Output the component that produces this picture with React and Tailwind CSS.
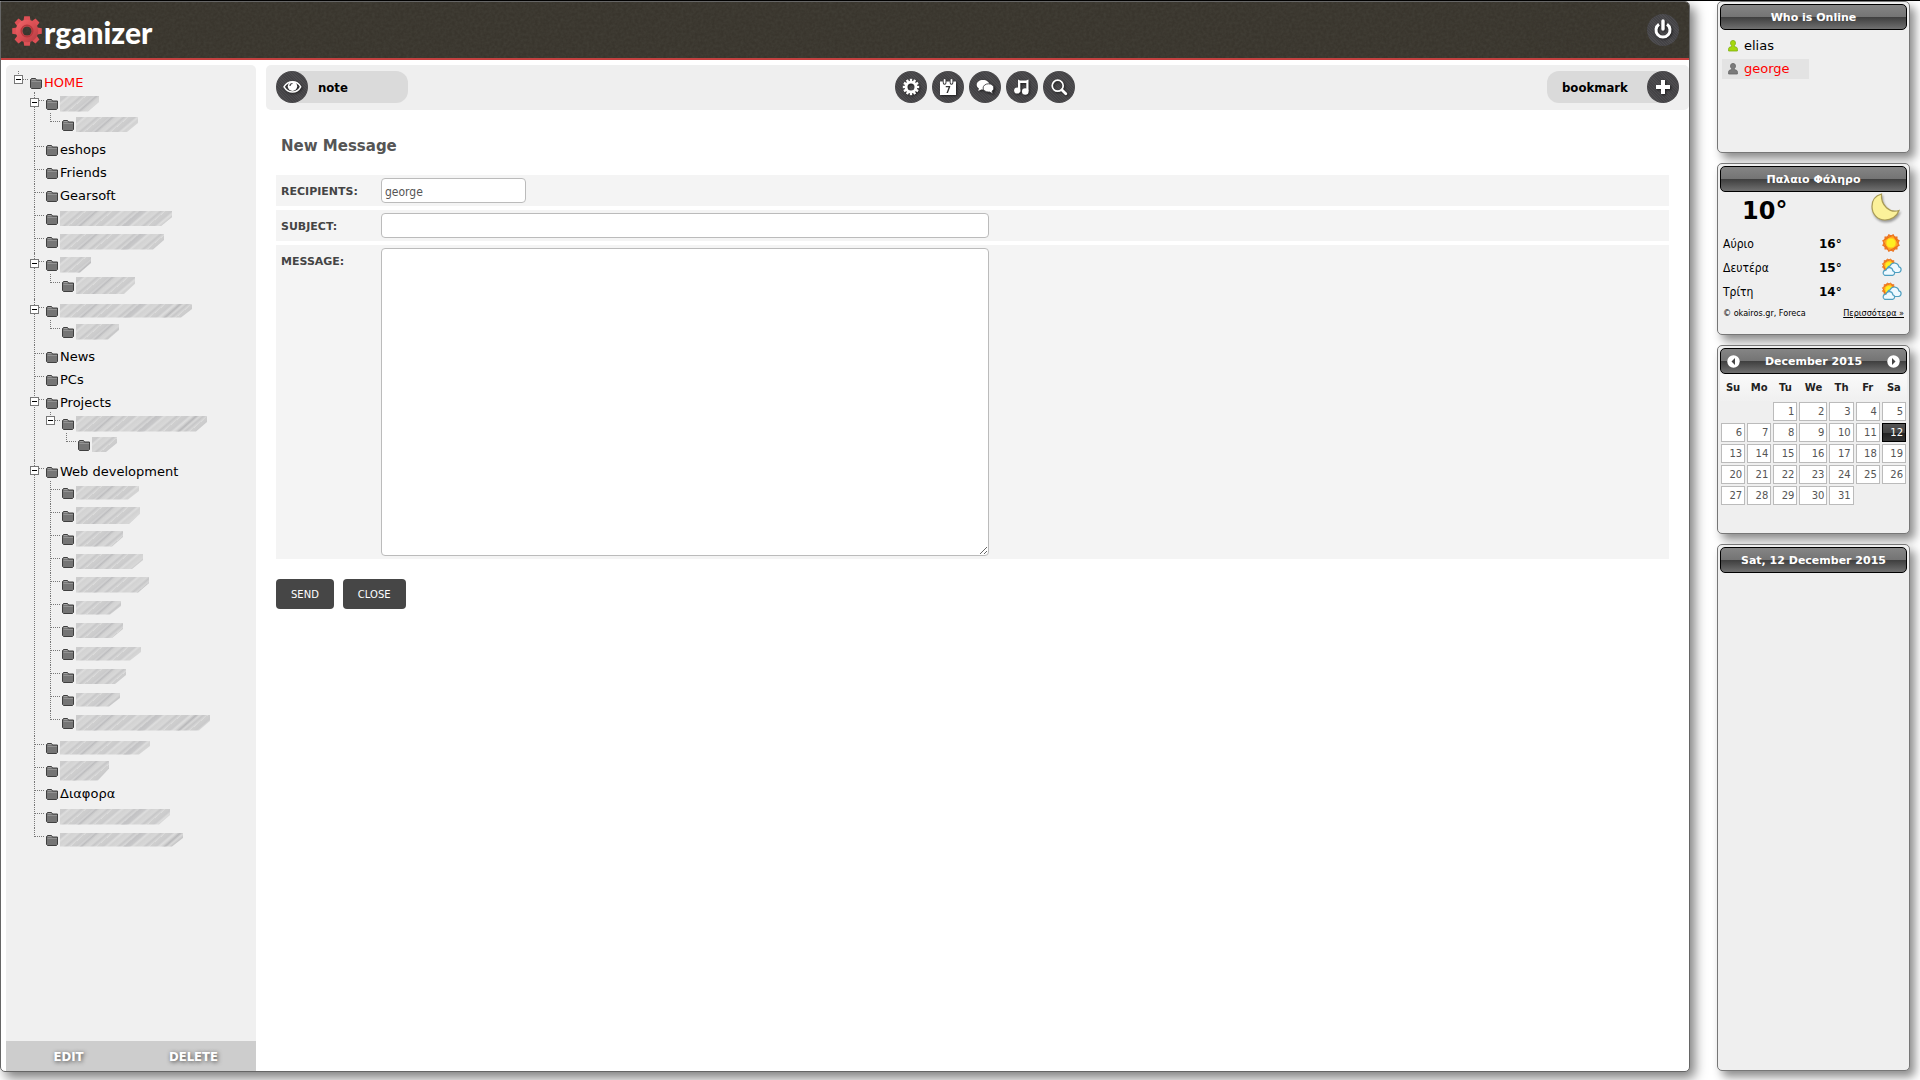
import React from "react";

const VERDANA = "font-['DejaVu_Sans',sans-serif]";
const TAHOMA = "font-['DejaVu_Sans_Condensed','DejaVu_Sans',sans-serif]";

const hidden = (w, h, children) => ({ w, h, children });
const named = (label, children) => ({ label, children });

const TREE = [
  {
    label: "HOME",
    active: true,
    children: [
      hidden(39, 16, [hidden(62, 15)]),
      named("eshops"),
      named("Friends"),
      named("Gearsoft"),
      hidden(112, 15),
      hidden(104, 16),
      hidden(31, 16, [hidden(59, 17)]),
      hidden(132, 14, [hidden(43, 16)]),
      named("News"),
      named("PCs"),
      named("Projects", [hidden(131, 16, [hidden(25, 15)])]),
      named("Web development", [
        hidden(63, 14),
        hidden(64, 17),
        hidden(47, 16),
        hidden(67, 15),
        hidden(73, 16),
        hidden(45, 14),
        hidden(47, 15),
        hidden(65, 14),
        hidden(50, 15),
        hidden(44, 14),
        hidden(134, 16),
      ]),
      hidden(90, 14),
      hidden(49, 20),
      named("Διαφορα"),
      hidden(110, 16),
      hidden(123, 14),
    ],
  },
];

function Folder() {
  return (
    <svg width="12" height="12" viewBox="0 0 12 12" className="shrink-0" aria-hidden="true">
      <path d="M.5 10.5V2.5l1-1h4l1 1.5h5v7.5l-1 1h-9z" fill="#757575" stroke="#3f3f3f" />
      <path d="M1.5 4.5h9.5" stroke="#929292" />
      <path d="M2 2.5h3.5" stroke="#a0a0a0" />
    </svg>
  );
}

function Masked({ w, h }) {
  return (
    <span
      className="block shrink-0 bg-[linear-gradient(139deg,transparent_0_22px,#bcbcbe_24px,transparent_26px_51px,#c2c2c4_53px,transparent_57px_77px,#b8b8ba_79px,transparent_81px),repeating-linear-gradient(140deg,#cfcfcf_0,#cacacb_4px,#dedede_6px,#d2d2d2_8px,#d8d8d8_12px,#c6c6c7_14px,#dcdcdc_17px)] [clip-path:polygon(0_0,100%_0,100%_40%,calc(100%-11px)_100%,0_100%)]"
      style={{ width: w, height: h }}
    />
  );
}

function Node({ node, depth, last }) {
  const inner = depth === 1;
  return (
    <li className="relative">
      <span
        className={
          "absolute left-0 top-0 border-l border-dotted border-[#777] " + (last ? "h-[9px]" : "h-full")
        }
      />
      <div className="relative flex h-[23px] items-center pl-3">
        <span className="absolute left-0 top-2 w-[10px] border-t border-dotted border-[#777]" />
        {node.children && (
          <button
            type="button"
            aria-label="Collapse"
            className={
              "absolute -left-1 flex size-[9px] items-center justify-center border border-[#777] bg-white " +
              (inner ? "top-1.5" : "top-1")
            }
          >
            <span className="h-px w-[5px] bg-black" />
          </button>
        )}
        <Folder />
        {node.label ? (
          <a
            href="#"
            className={"ml-0.5 whitespace-nowrap text-[13px] leading-[23px] " + (node.active ? "text-[#f00]" : "text-black")}
          >
            {node.label}
          </a>
        ) : (
          <span className="ml-0.5">
            <Masked w={node.w} h={node.h} />
          </span>
        )}
      </div>
      {node.children && <Branch nodes={node.children} depth={depth + 1} />}
    </li>
  );
}

function Branch({ nodes, depth }) {
  return (
    <ul className={depth === 0 ? "pl-3" : "-mt-0.5 pb-0.5 pl-4"}>
      {nodes.map((n, i) => (
        <Node key={i} node={n} depth={depth} last={i === nodes.length - 1} />
      ))}
    </ul>
  );
}

const teeth = (n) => Array.from({ length: n }, (_, i) => (360 / n) * i);

function LogoGear() {
  return (
    <svg width="30" height="30" viewBox="0 0 30 30" aria-hidden="true">
      <defs>
        <linearGradient id="gearFill" x1="0" y1="0" x2="1" y2="1">
          <stop offset="0" stopColor="#f2666a" />
          <stop offset="0.5" stopColor="#d94e53" />
          <stop offset="1" stopColor="#b03c42" />
        </linearGradient>
        <mask id="gearHole">
          <rect width="30" height="30" fill="#fff" />
          <circle cx="15" cy="15" r="4.6" fill="#000" />
        </mask>
      </defs>
      <g mask="url(#gearHole)" fill="#dd5055">
        {teeth(8).map((a) => (
          <path key={a} d="M11.300 6 12.200.2h5.600L18.700 6z" transform={`rotate(${a} 15 15)`} />
        ))}
        <circle cx="15" cy="15" r="11.2" fill="url(#gearFill)" />
        <circle cx="15" cy="15" r="5.800" fill="none" stroke="#b5383d" strokeWidth="1.400" />
      </g>
    </svg>
  );
}

const ICONS = {
  eye: (
    <g>
      <path d="M8 15.800C10.300 12.300 13 10.800 16.500 10.800s6.200 1.500 8.200 5c-2 3.500-4.800 5.200-8.200 5.200s-6.200-1.700-8.500-5.200z" fill="none" stroke="#fff" strokeWidth="1.500" />
      <circle cx="16.500" cy="15.300" r="4.700" fill="#fff" />
      <path d="M14 15a2.500 2.500 0 0 1 2.500-2.500" fill="none" stroke="#444346" strokeWidth="1.200" />
    </g>
  ),
  gear: (
    <g>
      {teeth(12).map((a) => (
        <rect key={a} x="14.800" y="7.800" width="2.400" height="4" fill="#fff" transform={`rotate(${a} 16 16)`} />
      ))}
      <circle cx="16" cy="16" r="4.900" fill="none" stroke="#fff" strokeWidth="2.800" />
    </g>
  ),
  calendar: (
    <g>
      <path d="M8 10.500h2.800v1.500a1.800 1.800 0 0 0 3.600 0v-1.500h3.300v1.500a1.800 1.800 0 0 0 3.600 0v-1.500H24V24H8z" fill="#fff" />
      <path d="M12.600 8.800v3M19.500 8.800v3" stroke="#fff" strokeWidth="1.800" strokeLinecap="round" />
      <text x="16" y="21.800" textAnchor="middle" fontSize="8" fontWeight="bold" fontFamily="DejaVu Sans" fill="#333">7</text>
    </g>
  ),
  chat: (
    <g fill="#fff">
      <path d="M14 9c-3.700 0-6.300 2.100-6.300 4.800 0 1.600.9 2.900 2.200 3.800-.1.900-.5 1.600-1 2.200 1.400-.1 2.600-.6 3.500-1.300.5.100 1 .1 1.600.1 3.700 0 6.400-2.100 6.400-4.800S17.700 9 14 9z" />
      <path d="M19.500 12.800c3.100 0 5.300 1.800 5.300 4.200 0 1.400-.7 2.500-1.800 3.200.1.900.5 1.700 1 2.300-1.300-.2-2.400-.8-3.300-1.500h-1.200c-3.100 0-5.400-1.700-5.400-4s2.300-4.200 5.400-4.200z" stroke="#444346" strokeWidth=".9" />
    </g>
  ),
  music: (
    <g fill="#fff">
      <path d="M12 8.500 14 9.500h6l2.500-1V20h-2.200v-8h-6v9H12z" />
      <circle cx="11.200" cy="19.500" r="3.100" />
      <circle cx="19.300" cy="20.500" r="3.300" />
    </g>
  ),
  search: (
    <g fill="none" stroke="#fff">
      <circle cx="14.700" cy="14.700" r="5.500" strokeWidth="1.700" />
      <path d="m19 19 3.800 3.800" strokeWidth="2.800" strokeLinecap="round" />
    </g>
  ),
  plus: <path d="M16 9v14M9 16h14" stroke="#fff" strokeWidth="4" />,
  power: (
    <g fill="none" stroke="#fff">
      <path d="M12 10.300a7 7 0 1 0 8 0" strokeWidth="3" />
      <path d="M16 7v8" strokeWidth="3.400" strokeLinecap="round" />
    </g>
  ),
};

function RoundButton({ icon, label }) {
  return (
    <button
      type="button"
      aria-label={label}
      className="size-8 shrink-0 rounded-full bg-[#444346] bg-[repeating-linear-gradient(45deg,transparent_0_1px,rgba(255,255,255,0.05)_1px_2px)]"
    >
      <svg width="32" height="32" viewBox="0 0 32 32" className="drop-shadow-[1px_1px_1px_rgba(0,0,0,0.6)]" aria-hidden="true">
        {ICONS[icon]}
      </svg>
    </button>
  );
}

function Panel({ title, className, children, left, right }) {
  return (
    <section
      className={
        "flex flex-col rounded-[5px] border border-[#777] bg-[#efefef] p-0.5 shadow-[5px_6px_10px_rgba(0,0,0,0.45)] " + className
      }
    >
      <h2 className="flex h-[26px] shrink-0 items-center justify-between rounded-[5px] border border-black bg-[linear-gradient(#858585_0%,#747474_49%,#3e3e3e_50%,#707070_100%)] px-1 text-[11px] font-bold text-white">
        {left}
        <span className="flex-1 pt-0.5 text-center">{title}</span>
        {right}
      </h2>
      {children}
    </section>
  );
}

function Arrow({ flip, label }) {
  return (
    <button type="button" aria-label={label} className="p-0.5">
      <svg width="13" height="13" viewBox="0 0 13 13" className={flip ? "rotate-180" : ""} aria-hidden="true">
        <circle cx="6.500" cy="6.500" r="6.200" fill="#fff" />
        <path d="M8 3v7L4.500 6.500z" fill="#444" />
      </svg>
    </button>
  );
}

function Person({ fill, edge }) {
  return (
    <svg width="10" height="12" viewBox="0 0 10 12" aria-hidden="true">
      <path d="M.6 11V8.600Q.6 7 3.600 6.600V5.600Q2.500 4.600 2.500 3a2.500 2.600 0 0 1 5 0Q7.500 4.600 6.400 5.600v1Q9.400 7 9.400 8.600V11z" fill={fill} stroke={edge} strokeWidth=".8" />
    </svg>
  );
}

function Moon() {
  return (
    <svg width="30" height="30" viewBox="0 0 30 30" className="drop-shadow-[1px_2px_1px_rgba(0,0,0,0.35)]" aria-hidden="true">
      <path d="M11.500 2C6 3.500 2 8 2 14.500c0 7.500 5.500 13.500 13 13.500 6 0 12-3.500 14-9.500-9 3-18.500-5-17.500-16.500z" fill="#fbf19a" stroke="#a89a55" strokeWidth="1.200" />
    </svg>
  );
}

function SunShape() {
  return (
    <g>
      {[0, 30, 60].map((a) => (
        <rect key={a} x="4" y="4" width="12" height="12" fill="#ff9d1f" stroke="#ea6f1c" transform={`rotate(${a} 10 10)`} />
      ))}
      <circle cx="10" cy="10" r="5" fill="#ffee20" stroke="#ffc21f" />
    </g>
  );
}

function Weather({ cloudy }) {
  return (
    <svg width="21" height="20" viewBox="0 0 21 20" aria-hidden="true">
      {cloudy ? (
        <g>
          <g transform="translate(0 .5) scale(.8)">
            <SunShape />
          </g>
          <path d="M9 15.500h8.500a2.900 2.900 0 0 0 .4-5.700 4.600 4.600 0 0 0-8.800-.9A3.400 3.400 0 0 0 9 15.500z" fill="#eef9ff" stroke="#4f9fc0" strokeWidth="1.200" />
          <path d="M3.600 18.300h8a2.300 2.300 0 0 0 .3-4.500 3.600 3.600 0 0 0-7-.6 2.700 2.700 0 0 0-1.300 5.100z" fill="#eef9ff" stroke="#4f9fc0" strokeWidth="1.200" />
        </g>
      ) : (
        <SunShape />
      )}
    </svg>
  );
}

const FORECAST = [
  ["Αύριο", "16°", false],
  ["Δευτέρα", "15°", true],
  ["Τρίτη", "14°", true],
];

const WEEKS = [
  [null, null, 1, 2, 3, 4, 5],
  [6, 7, 8, 9, 10, 11, 12],
  [13, 14, 15, 16, 17, 18, 19],
  [20, 21, 22, 23, 24, 25, 26],
  [27, 28, 29, 30, 31, null, null],
];

const FIELD = "rounded-[4px] border border-[#bbb] bg-white px-[3px] text-[12px] text-[#555] outline-none";
const LABEL = "w-[105px] shrink-0 pl-[5px] pt-0.5 text-[11px] font-bold leading-[23px] text-[#444]";

export default function App() {
  return (
    <div className={"flex min-h-screen border-t border-black bg-white pb-2 text-black " + VERDANA}>
      <main className="mr-[27px] flex min-w-0 flex-1 flex-col overflow-hidden rounded-b-[5px] rounded-tr-[5px] border border-[#666] bg-white shadow-[5px_6px_12px_rgba(0,0,0,0.5)]">
        <header className="relative flex h-[58px] shrink-0 items-center justify-between border-b-2 border-[#c4403f] bg-[#39352d] pl-[11px] pr-[10px]">
          <svg className="pointer-events-none absolute inset-0 size-full opacity-25" aria-hidden="true">
            <filter id="grain">
              <feTurbulence type="fractalNoise" baseFrequency="0.35" numOctaves="2" />
              <feColorMatrix values="0 0 0 0 0.1  0 0 0 0 0.1  0 0 0 0 0.08  1.600 0 0 0 -0.4" />
            </filter>
            <rect width="100%" height="100%" filter="url(#grain)" />
          </svg>
          <a href="#" className="relative flex items-center gap-0.5 pt-0.5">
            <LogoGear />
            <span className="pt-0.5 font-['Lato',sans-serif] text-[30px] font-black leading-[30px] text-white">rganizer</span>
          </a>
          <div className="relative flex">
            <RoundButton icon="power" label="Log out" />
          </div>
        </header>

        <div className="flex flex-1 gap-[10px] pl-[5px] pt-[5px]">
          <nav className="flex w-[250px] shrink-0 flex-col justify-between rounded-t-[5px] bg-[#f0f0f0] pt-1.5">
            <Branch nodes={TREE} depth={0} />
            <div className={"flex h-[30px] bg-[#cdcdcd] pt-0.5 text-[13px] font-bold text-white " + TAHOMA}>
              <button type="button" className="flex-1 [text-shadow:1px_1px_4px_#444]">EDIT</button>
              <button type="button" className="flex-1 [text-shadow:1px_1px_4px_#444]">DELETE</button>
            </div>
          </nav>

          <div className="flex min-w-0 flex-1 flex-col">
            <div className="flex h-[45px] items-center justify-between rounded-[5px] bg-[#efefef] px-[10px] pb-0.5">
              <div className={"flex w-[132px] items-center gap-[10px] rounded-[16px] rounded-r-[12px] bg-[#dadada] text-[13px] font-bold " + TAHOMA}>
                <RoundButton icon="eye" label="View note" />
                <span className="pt-0.5">note</span>
              </div>
              <div className="flex gap-[5px] pl-[15px]">
                <RoundButton icon="gear" label="Settings" />
                <RoundButton icon="calendar" label="Calendar" />
                <RoundButton icon="chat" label="Messages" />
                <RoundButton icon="music" label="Music" />
                <RoundButton icon="search" label="Search" />
              </div>
              <div className={"flex w-[132px] items-center justify-between rounded-[16px] rounded-l-[12px] bg-[#dadada] pl-[15px] text-[13px] font-bold " + TAHOMA}>
                <span className="pt-0.5">bookmark</span>
                <RoundButton icon="plus" label="Add bookmark" />
              </div>
            </div>

            <h1 className="mb-[19px] ml-[15px] mt-[26px] text-[15px] font-bold leading-5 text-[#555]">New Message</h1>

            <form className="flex flex-col gap-1 pl-[10px] pr-5">
              <div className="flex bg-[#f4f4f4] py-[3px]">
                <label htmlFor="recipients" className={LABEL}>RECIPIENTS:</label>
                <input id="recipients" defaultValue="george" className={"h-[25px] w-[145px] pt-0.5 " + FIELD + " " + TAHOMA} />
              </div>
              <div className="flex bg-[#f4f4f4] py-[3px]">
                <label htmlFor="subject" className={LABEL}>SUBJECT:</label>
                <input id="subject" className={"h-[25px] w-[608px] pt-0.5 " + FIELD + " " + TAHOMA} />
              </div>
              <div className="flex bg-[#f4f4f4] py-[3px]">
                <label htmlFor="message" className={LABEL}>MESSAGE:</label>
                <textarea id="message" className={"block h-[308px] w-[608px] resize " + FIELD + " " + TAHOMA} />
              </div>
              <div className={"mt-4 flex gap-[9px] text-[10px] text-white " + VERDANA}>
                <button type="button" className="h-[30px] rounded-[4px] bg-[#464646] px-[15px]">SEND</button>
                <button type="button" className="h-[30px] rounded-[4px] bg-[#464646] px-[15px]">CLOSE</button>
              </div>
            </form>
          </div>
        </div>
      </main>

      <aside className="mr-[10px] flex w-[193px] shrink-0 flex-col gap-[10px] pb-px">
        <Panel title="Who is Online" className="min-h-[152px]">
          <ul className="flex flex-col gap-[3px] pl-0.5 pt-1.5 text-[13px] leading-5">
            <li className="flex w-[87px] items-center gap-1.5 pl-1.5">
              <Person fill="#a6d80d" edge="#7fae12" />
              <a href="#">elias</a>
            </li>
            <li className="flex w-[87px] items-center gap-1.5 bg-[#e3e3e3] pl-1.5">
              <Person fill="#7b7b7b" edge="#666" />
              <a href="#" className="text-[#f00]">george</a>
            </li>
          </ul>
        </Panel>

        <Panel title="Παλαιο Φάληρο" className="min-h-[172px]">
          <div className="flex h-[39px] items-start justify-between pl-[22px] pr-[7px]">
            <span className="text-[24px] font-bold leading-[38px]">10°</span>
            <Moon />
          </div>
          <ul>
            {FORECAST.map(([day, temp, cloudy]) => (
              <li key={day} className="flex h-6 items-center pl-[3px] pr-[5px]">
                <span className={"w-24 pt-0.5 text-[12px] " + TAHOMA}>{day}</span>
                <span className="flex-1 pt-0.5 text-[12px] font-bold">{temp}</span>
                <Weather cloudy={cloudy} />
              </li>
            ))}
          </ul>
          <div className={"flex items-center justify-between px-[3px] pt-0.5 text-[9px] leading-4 " + TAHOMA}>
            <span>© okairos.gr, Foreca</span>
            <a href="#" className="underline">Περισσότερα »</a>
          </div>
        </Panel>

        <Panel
          title="December 2015"
          className="min-h-[189px]"
          left={<Arrow label="Previous month" />}
          right={<Arrow label="Next month" flip />}
        >
          <table className="w-full table-fixed border-separate border-spacing-0 text-[10px]">
            <colgroup>
              <col />
              <col />
              <col />
              <col className="w-[30px]" />
              <col />
              <col />
              <col />
            </colgroup>
            <thead className="bg-[linear-gradient(#fafafa,#f0f0f0)]">
              <tr className="h-[27px]">
                {["Su", "Mo", "Tu", "We", "Th", "Fr", "Sa"].map((d) => (
                  <th key={d} className="p-0 text-center font-bold text-[#222]">{d}</th>
                ))}
              </tr>
            </thead>
            <tbody>
              {WEEKS.map((week, i) => (
                <tr key={i}>
                  {week.map((d, j) => (
                    <td key={j} className="h-[21px] p-px">
                      {d && (
                        <a
                          href="#"
                          className={
                            "block h-[19px] border pr-0.5 text-right leading-[17px] " +
                            (d === 12
                              ? "border-black bg-[linear-gradient(#555_0%,#444_50%,#222_51%,#333_100%)] text-white"
                              : "border-[#bbb] bg-white text-[#555]")
                          }
                        >
                          {d}
                        </a>
                      )}
                    </td>
                  ))}
                </tr>
              ))}
            </tbody>
          </table>
        </Panel>

        <Panel title="Sat, 12 December 2015" className="flex-1" />
      </aside>
    </div>
  );
}
